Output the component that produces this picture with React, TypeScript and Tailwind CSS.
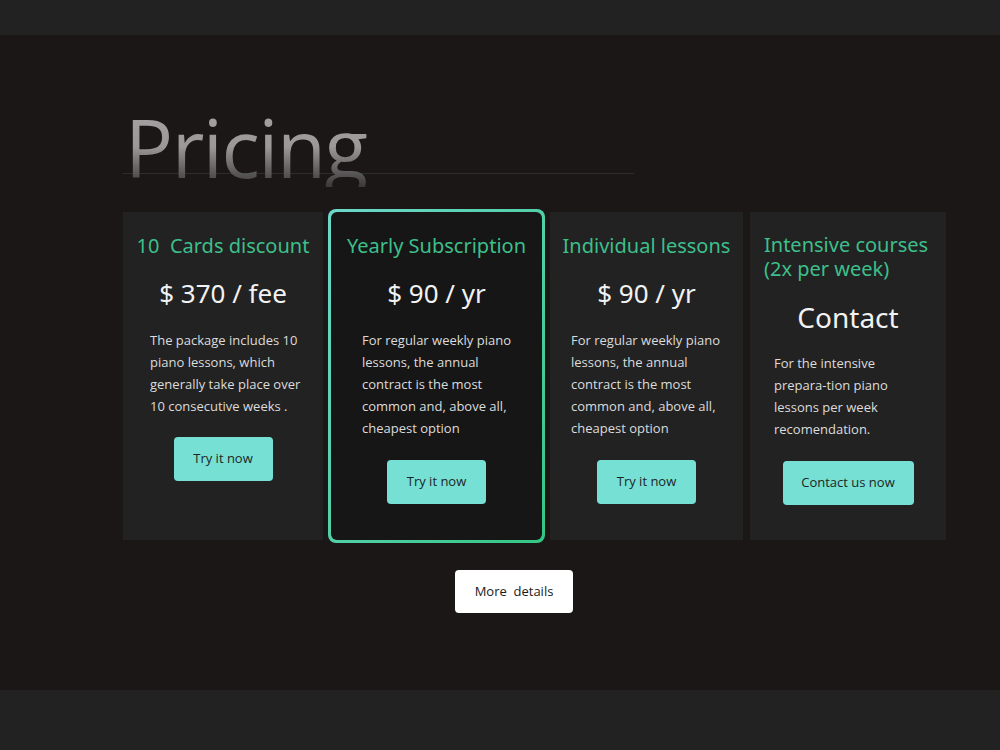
import React from 'react'

const body = "font-['Open_Sans',sans-serif] text-[13px] leading-[22px] text-[#dcdcdc]"
const titleFont = "font-['Noto_Sans',sans-serif] text-[20px] text-[#3dbf8b]"
const title = titleFont + ' leading-[26px]'
const price = "font-['Noto_Sans',sans-serif] text-[26px] leading-[32px] text-[#f2f2f2]"
const btn = "bg-[#77e0d5] rounded-[4px] h-[44px] font-['Open_Sans',sans-serif] text-[13px] text-[#1c2624]"

const App = () => {
    return (
        <div className='w-full min-h-[750px] flex flex-col bg-[#1c1717]'>
            <div className='h-[35px] bg-[#222222]'></div>

            <section className='h-[655px] pt-[72px] pl-[123px]'>
                <div className='w-[511px] h-[67px] border-b border-[#2a2f2c] pl-[2px]'>
                    <h1 className="font-['Open_Sans',sans-serif] text-[80px] leading-none tracking-[-1.5px] bg-gradient-to-b from-[#a4a2a2] via-[#9a9898] to-[#3a3838] bg-clip-text text-transparent w-fit">Pricing</h1>
                </div>

                <div className='mt-[35px] flex items-center h-[334px] gap-[5px]'>
                    {/* 10 cards */}
                    <div className='w-[200px] h-[328px] bg-[#222222] flex flex-col items-center pt-[21px]'>
                        <h3 className={title + ' whitespace-pre'}>10  Cards discount</h3>
                        <p className={price + ' mt-[18px]'}>$ 370 / fee</p>
                        <p className={body + ' mt-[20px] self-start ml-[27px] w-[152px]'}>The package includes 10 piano lessons, which generally take place over 10 consecutive weeks .</p>
                        <button className={btn + ' mt-[20px] w-[99px]'}>Try it now</button>
                    </div>

                    {/* yearly, highlighted */}
                    <div className='w-[217px] h-[334px] p-[3px] rounded-[8px] bg-gradient-to-br from-[#6cd8cb] to-[#33c683]'>
                        <div className='w-full h-full rounded-[6px] bg-[#161616] flex flex-col items-center pt-[21px]'>
                            <h3 className={title}>Yearly Subscription</h3>
                            <p className={price + ' mt-[18px]'}>$ 90 / yr</p>
                            <p className={body + ' mt-[20px] self-start ml-[31px] w-[150px]'}>For regular weekly piano lessons, the annual contract is the most common and, above all, cheapest option</p>
                            <button className={btn + ' mt-[21px] w-[99px]'}>Try it now</button>
                        </div>
                    </div>

                    {/* individual */}
                    <div className='w-[193px] h-[328px] bg-[#222222] flex flex-col items-center pt-[21px]'>
                        <h3 className={title}>Individual lessons</h3>
                        <p className={price + ' mt-[18px]'}>$ 90 / yr</p>
                        <p className={body + ' mt-[20px] self-start ml-[21px] w-[150px]'}>For regular weekly piano lessons, the annual contract is the most common and, above all, cheapest option</p>
                        <button className={btn + ' mt-[21px] w-[99px]'}>Try it now</button>
                    </div>

                    {/* intensive */}
                    <div className='ml-[2px] w-[196px] h-[328px] bg-[#222222] flex flex-col items-center pt-[21px]'>
                        <h3 className={titleFont + ' self-start pl-[14px] leading-[24px]'}>Intensive courses<br />(2x per week)</h3>
                        <p className="font-['Noto_Sans',sans-serif] text-[28px] leading-[34px] text-[#f2f2f2] mt-[19px]">Contact</p>
                        <p className={body + ' mt-[18px] self-start ml-[24px] w-[130px]'}>For the intensive prepara-tion piano lessons per week recomendation.</p>
                        <button className={btn + ' mt-[21px] w-[131px]'}>Contact us now</button>
                    </div>
                </div>

                <div className='mt-[27px] pl-[332px]'>
                    <button className="bg-white rounded-[4px] w-[118px] h-[43px] font-['Open_Sans',sans-serif] text-[13px] text-[#1a1a1a] whitespace-pre">More  details</button>
                </div>
            </section>

            <div className='h-[60px] bg-[#222222]'></div>
        </div>
    )
}

export default App
